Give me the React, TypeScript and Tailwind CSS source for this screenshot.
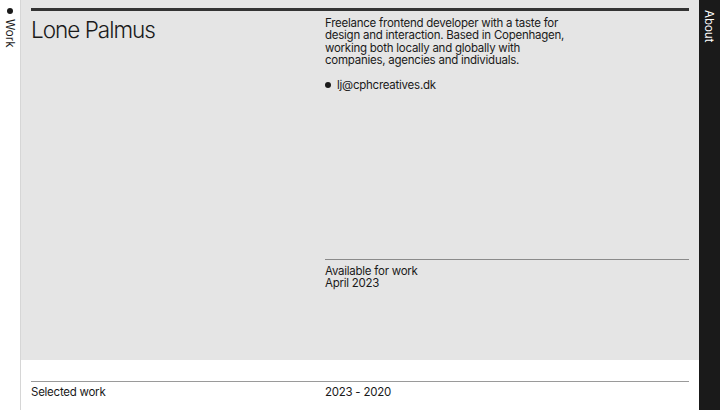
const bio = [
  'Freelance frontend developer with a taste for',
  'design and interaction. Based in Copenhagen,',
  'working both locally and globally with',
  'companies, agencies and individuals.',
];

export default function App() {
  return (
    <div
      className="flex h-[410px] w-[720px] overflow-hidden bg-white text-[#1a1a1a]"
      style={{ fontFamily: 'Inter, "Noto Sans", sans-serif' }}
    >
      <aside className="w-[21px] shrink-0 border-r border-[#d6d6d6] bg-white">
        <div className="flex items-center gap-[5px] pl-[4px] pt-[8px] text-[11.5px] leading-[12px] [writing-mode:vertical-rl]">
          <span className="h-[6px] w-[6px] rounded-full bg-[#1a1a1a]"></span>
          <span>Work</span>
        </div>
      </aside>

      <main className="flex min-w-0 flex-1 flex-col">
        <section className="flex h-[360px] flex-col bg-[#e5e5e5] px-[10px] pt-[8px]">
          <div className="h-[3px] bg-[#333333]"></div>
          <div className="grid flex-1 grid-cols-[294px_1fr]">
            <h1 className="pt-[4px] text-[22.5px] leading-[30px] font-light tracking-[-1px]">Lone Palmus</h1>
            <div className="flex flex-col pt-[6px] text-[11.5px] leading-[12.4px] tracking-[-0.25px]">
              <p className="whitespace-nowrap">
                {bio.map((line) => (
                  <span key={line} className="block">
                    {line}
                  </span>
                ))}
              </p>
              <div className="mt-[12px] flex items-center gap-[6px]">
                <span className="h-[6px] w-[6px] rounded-full bg-[#1a1a1a]"></span>
                <span>lj@cphcreatives.dk</span>
              </div>
              <div className="mt-[168px] border-t border-[#8a8a8a] pt-[5px]">
                <p>Available for work</p>
                <p>April 2023</p>
              </div>
            </div>
          </div>
        </section>

        <section className="flex-1 bg-white px-[10px] pt-[21px]">
          <div className="grid grid-cols-[294px_1fr] border-t border-[#9a9a9a] pt-[3px] text-[11.5px] leading-[14px] tracking-[-0.25px]">
            <span>Selected work</span>
            <span>2023 - 2020</span>
          </div>
        </section>
      </main>

      <aside className="w-[21px] shrink-0 bg-[#1a1a1a] text-white">
        <div className="pl-[4px] pt-[10px] text-[11.5px] leading-[12px] [writing-mode:vertical-rl]">About</div>
      </aside>
    </div>
  );
}
